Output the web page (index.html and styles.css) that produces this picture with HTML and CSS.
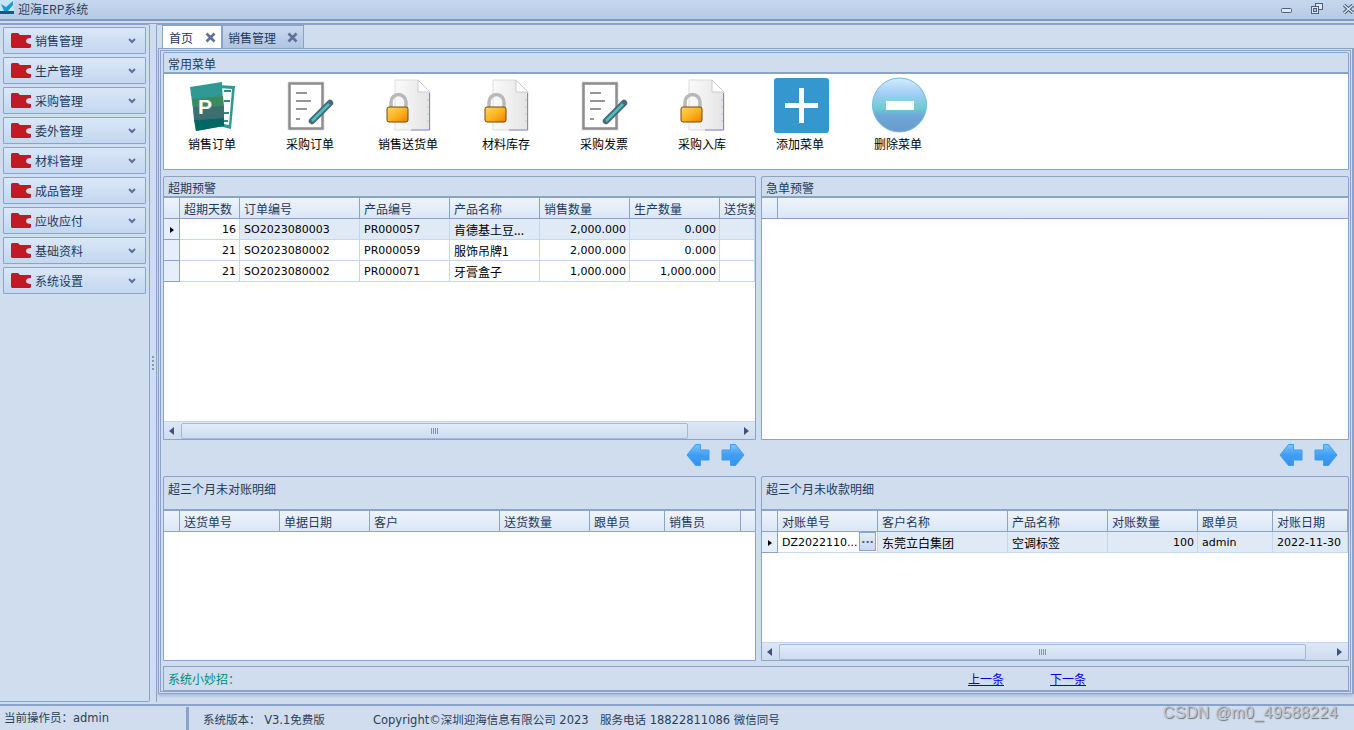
FILE: index.html
```html
<!DOCTYPE html>
<html lang="zh-CN">
<head>
<meta charset="utf-8">
<title>迎海ERP系统</title>
<link rel="stylesheet" href="styles.css">
</head>
<body>
<svg class="defs" width="0" height="0" aria-hidden="true">
  <defs>
    <linearGradient id="arrowfill" x1="0" y1="0" x2="0" y2="1"><stop offset="0" stop-color="#7cc4fa"/><stop offset=".5" stop-color="#3f9ff5"/><stop offset="1" stop-color="#3591ea"/></linearGradient>
    <symbol id="folder" viewBox="0 0 20 15"><path d="M1 0H7L9 2H20V5Q15 5 15 8T20 11V14L19 15H1L0 14V1Z" fill="#c11a25"/></symbol>
    <symbol id="chev" viewBox="0 0 8 6"><path d="M1 1L4 4L7 1" fill="none" stroke="#5b7197" stroke-width="2"/></symbol>
    <symbol id="close-x" viewBox="0 0 11 11"><path d="M1.500 1.500L9.500 9.500M9.500 1.500L1.500 9.500" stroke="#5c7298" stroke-width="2.600"/></symbol>
    <symbol id="publisher" viewBox="0 0 64 60">
      <path d="M36 10L54 11L50 54L34 50Z" fill="#2f9a94"/>
      <path d="M38 13L51 14L48 50L38 48Z" fill="#fff"/>
      <path d="M43 16H50M43 26H49M43 38H48M42 46H47" stroke="#2c8d8c" stroke-width="2"/>
      <path d="M9 12L41 7L43 51L15 56Z" fill="#2f9a94"/>
      <path d="M11 24L42 21L43 31L12 32Z" fill="#3d8a62"/>
      <path d="M12 32L43 31V43L13 45Z" fill="#3d6f72"/>
      <path d="M13 45L43 43V51L15 56Z" fill="#006763"/>
      <text x="17" y="39" class="pub-letter">P</text>
    </symbol>
    <symbol id="docpen" viewBox="0 0 64 60">
      <rect x="8" y="6" width="38" height="50" rx="2" fill="#f1f1f1"/>
      <rect x="10.500" y="8.500" width="33" height="45" fill="#fff" stroke="#8c8c8c" stroke-width="2.500"/>
      <path d="M17 18H28M17 26H32M17 34H28M17 44H21" stroke="#969696" stroke-width="2"/>
      <path d="M33 46L51 28" stroke="#4a6a72" stroke-width="6.500" stroke-linecap="round"/>
      <path d="M33 46L50 29" stroke="#4fbecb" stroke-width="2.500"/>
    </symbol>
    <symbol id="lockdoc" viewBox="0 0 64 60">
      <defs>
        <linearGradient id="lockfill" x1="0" y1="0" x2="1" y2="1"><stop offset="0" stop-color="#ffd65f"/><stop offset=".55" stop-color="#fbb11c"/><stop offset="1" stop-color="#f07c07"/></linearGradient>
        <linearGradient id="pagefill" x1="0" y1="0" x2="1" y2="0"><stop offset="0" stop-color="#fafafa"/><stop offset="1" stop-color="#e4e4e4"/></linearGradient>
      </defs>
      <path d="M18 5H41L53 17V55H18Z" fill="url(#pagefill)" stroke="#dcdcdc"/>
      <path d="M41 5V17H53Z" fill="#fff" stroke="#cbcbcb"/>
      <path d="M52.500 18V55H34" fill="none" stroke="#8a86c4"/>
      <path d="M51 24V50" stroke="#d6d6d6" stroke-width="2" stroke-dasharray="2 5"/>
      <path d="M14 33V27A7.500 7.500 0 0 1 29 27V33" fill="none" stroke="#b9b9b9" stroke-width="3.500"/>
      <rect x="10" y="32" width="21" height="15" rx="2" fill="url(#lockfill)" stroke="#6f4a10"/>
    </symbol>
    <symbol id="add" viewBox="0 0 64 60">
      <rect x="5" y="3" width="55" height="55" rx="3" fill="#3497ce"/>
      <path d="M32.500 13V48M16 30.500H49" stroke="#fff" stroke-width="5"/>
    </symbol>
    <symbol id="del" viewBox="0 0 64 60">
      <defs>
        <linearGradient id="ball" x1="0" y1="0" x2="0" y2="1"><stop offset="0" stop-color="#d2ecfb"/><stop offset=".3" stop-color="#9fcdf4"/><stop offset=".55" stop-color="#6fcdd2"/><stop offset=".7" stop-color="#6ea7d8"/><stop offset="1" stop-color="#6a9acb"/></linearGradient>
      </defs>
      <circle cx="32.500" cy="30" r="27" fill="url(#ball)" stroke="#6dbbe0"/>
      <rect x="19" y="26" width="28" height="9" fill="#fff"/>
    </symbol>
    <symbol id="arrow" viewBox="0 0 24 24">
      <path d="M9.500 1.500L1 12L9.500 22.500H14.500V17H23V7H14.500V1.500Z" fill="url(#arrowfill)" stroke="#3f9ff5" stroke-width="1" stroke-linejoin="round"/>
    </symbol>
  </defs>
</svg>

<header class="titlebar">
  <svg class="app-logo" viewBox="0 0 14 14" width="14" height="14"><rect width="14" height="14" fill="#c6e3f1"/><path d="M1 4L6 7L13 1V5L8 11H4Z" fill="#1c9ad6"/><path d="M0 11H14V14H0Z" fill="#14597f"/></svg>
  <span class="app-name">迎海ERP系统</span>
  <div class="win-controls">
    <svg class="win-min" width="11" height="5" viewBox="0 0 11 5"><rect x=".5" y=".5" width="10" height="4" rx="1" fill="#dfe8f4" stroke="#4c5f7f"/></svg>
    <svg class="win-restore" width="12" height="11" viewBox="0 0 12 11"><rect x="4.500" y=".5" width="7" height="6" fill="#dfe8f4" stroke="#4c5f7f"/><rect x=".5" y="3.500" width="7" height="7" fill="#dfe8f4" stroke="#4c5f7f"/><rect x="2.500" y="5.500" width="3" height="3" fill="#b9cce6" stroke="#4c5f7f"/></svg>
    <svg class="win-close" width="11" height="10" viewBox="0 0 11 10"><path d="M1 1L10 9M10 1L1 9" stroke="#4c5f7f" stroke-width="3.500"/><path d="M1 1L10 9M10 1L1 9" stroke="#e6eef8" stroke-width="1.200"/></svg>
  </div>
</header>

<div class="main">
  <nav class="sidebar">
    <a class="nav-item"><svg class="nav-folder"><use href="#folder"/></svg><span class="nav-label">销售管理</span><svg class="nav-chev"><use href="#chev"/></svg></a>
    <a class="nav-item"><svg class="nav-folder"><use href="#folder"/></svg><span class="nav-label">生产管理</span><svg class="nav-chev"><use href="#chev"/></svg></a>
    <a class="nav-item"><svg class="nav-folder"><use href="#folder"/></svg><span class="nav-label">采购管理</span><svg class="nav-chev"><use href="#chev"/></svg></a>
    <a class="nav-item"><svg class="nav-folder"><use href="#folder"/></svg><span class="nav-label">委外管理</span><svg class="nav-chev"><use href="#chev"/></svg></a>
    <a class="nav-item"><svg class="nav-folder"><use href="#folder"/></svg><span class="nav-label">材料管理</span><svg class="nav-chev"><use href="#chev"/></svg></a>
    <a class="nav-item"><svg class="nav-folder"><use href="#folder"/></svg><span class="nav-label">成品管理</span><svg class="nav-chev"><use href="#chev"/></svg></a>
    <a class="nav-item"><svg class="nav-folder"><use href="#folder"/></svg><span class="nav-label">应收应付</span><svg class="nav-chev"><use href="#chev"/></svg></a>
    <a class="nav-item"><svg class="nav-folder"><use href="#folder"/></svg><span class="nav-label">基础资料</span><svg class="nav-chev"><use href="#chev"/></svg></a>
    <a class="nav-item"><svg class="nav-folder"><use href="#folder"/></svg><span class="nav-label">系统设置</span><svg class="nav-chev"><use href="#chev"/></svg></a>
  </nav>

  <div class="splitter"><i></i><i></i><i></i><i></i></div>

  <section class="workspace">
    <div class="tabs">
      <div class="tab tab-active"><span>首页</span><svg class="tab-x"><use href="#close-x"/></svg></div>
      <div class="tab"><span>销售管理</span><svg class="tab-x"><use href="#close-x"/></svg></div>
    </div>
    <div class="page">
      <div class="page-inner">
        <section class="group group-menu">
          <h2 class="group-head">常用菜单</h2>
          <div class="shortcuts">
            <div class="shortcut"><svg class="shortcut-icon"><use href="#publisher"/></svg><span>销售订单</span></div>
            <div class="shortcut"><svg class="shortcut-icon"><use href="#docpen"/></svg><span>采购订单</span></div>
            <div class="shortcut"><svg class="shortcut-icon"><use href="#lockdoc"/></svg><span>销售送货单</span></div>
            <div class="shortcut"><svg class="shortcut-icon"><use href="#lockdoc"/></svg><span>材料库存</span></div>
            <div class="shortcut"><svg class="shortcut-icon"><use href="#docpen"/></svg><span>采购发票</span></div>
            <div class="shortcut"><svg class="shortcut-icon"><use href="#lockdoc"/></svg><span>采购入库</span></div>
            <div class="shortcut"><svg class="shortcut-icon"><use href="#add"/></svg><span>添加菜单</span></div>
            <div class="shortcut"><svg class="shortcut-icon"><use href="#del"/></svg><span>删除菜单</span></div>
          </div>
        </section>

        <div class="columns">
          <div class="column">
            <section class="group group-top">
              <h2 class="group-head">超期预警</h2>
              <div class="grid-area">
                <table class="grid">
                  <thead><tr><th class="c-rh"></th><th class="c60">超期天数</th><th class="c120">订单编号</th><th class="c90">产品编号</th><th class="c90">产品名称</th><th class="c90">销售数量</th><th class="c90">生产数量</th><th class="c-clip">送货数</th></tr></thead>
                  <tbody>
                    <tr class="row-sel"><td class="rh"><i class="cursor"></i></td><td class="num cell-plain">16</td><td>SO2023080003</td><td>PR000057</td><td class="cjk">肯德基土豆...</td><td class="num">2,000.000</td><td class="num">0.000</td><td></td></tr>
                    <tr><td class="rh"></td><td class="num">21</td><td>SO2023080002</td><td>PR000059</td><td class="cjk">服饰吊牌1</td><td class="num">2,000.000</td><td class="num">0.000</td><td></td></tr>
                    <tr><td class="rh"></td><td class="num">21</td><td>SO2023080002</td><td>PR000071</td><td class="cjk">牙膏盒子</td><td class="num">1,000.000</td><td class="num">1,000.000</td><td></td></tr>
                  </tbody>
                </table>
              </div>
              <div class="hscroll"><i class="sb-left"></i><div class="sb-track"><div class="sb-thumb thumb-a"><span class="grip"></span></div></div><i class="sb-right"></i></div>
            </section>
            <div class="pager"><svg class="pager-arrow"><use href="#arrow"/></svg><svg class="pager-arrow flip"><use href="#arrow"/></svg></div>
            <section class="group group-bottom">
              <h2 class="group-head tall">超三个月未对账明细</h2>
              <div class="grid-area">
                <table class="grid">
                  <thead><tr><th class="c-rh"></th><th class="c100">送货单号</th><th class="c90">单据日期</th><th class="c130">客户</th><th class="c90">送货数量</th><th class="c75">跟单员</th><th class="c76">销售员</th><th class="c-rest"></th></tr></thead>
                </table>
              </div>
            </section>
          </div>

          <div class="column">
            <section class="group group-top">
              <h2 class="group-head">急单预警</h2>
              <div class="grid-area">
                <table class="grid">
                  <thead><tr><th class="c-rh"></th><th class="c-fill"></th></tr></thead>
                </table>
              </div>
            </section>
            <div class="pager"><svg class="pager-arrow"><use href="#arrow"/></svg><svg class="pager-arrow flip"><use href="#arrow"/></svg></div>
            <section class="group group-bottom">
              <h2 class="group-head tall">超三个月未收款明细</h2>
              <div class="grid-area">
                <table class="grid">
                  <thead><tr><th class="c-rh"></th><th class="c100">对账单号</th><th class="c130">客户名称</th><th class="c100">产品名称</th><th class="c90">对账数量</th><th class="c75">跟单员</th><th class="c75">对账日期</th></tr></thead>
                  <tbody>
                    <tr class="row-sel"><td class="rh"><i class="cursor"></i></td><td class="cell-plain cell-edit">DZ2022110...<b class="ellipsis-btn">···</b></td><td class="cjk">东莞立白集团</td><td class="cjk">空调标签</td><td class="num">100</td><td>admin</td><td>2022-11-30</td></tr>
                  </tbody>
                </table>
              </div>
              <div class="hscroll"><i class="sb-left"></i><div class="sb-track"><div class="sb-thumb thumb-b"><span class="grip"></span></div></div><i class="sb-right"></i></div>
            </section>
          </div>
        </div>

        <footer class="tips">
          <span class="tips-label">系统小妙招：</span>
          <a class="tips-link tips-prev" href="#">上一条</a>
          <a class="tips-link tips-next" href="#">下一条</a>
        </footer>
      </div>
    </div>
  </section>
</div>

<footer class="status">
  <span class="status-user">当前操作员：admin</span>
  <span class="status-ver">系统版本： V3.1免费版</span>
  <span class="status-copy">Copyright©深圳迎海信息有限公司 2023</span>
  <span class="status-tel">服务电话 18822811086 微信同号</span>
</footer>
<div class="watermark">CSDN @m0_49588224</div>
</body>
</html>
```

FILE: styles.css
```css
* { box-sizing: border-box; }
html, body { margin: 0; height: 100%; }
body {
  position: relative;
  width: 1354px;
  height: 730px;
  overflow: hidden;
  display: flex;
  flex-direction: column;
  background: #d0ddee;
  color: #1e395b;
  font: 12px "DejaVu Sans", "Noto Sans CJK SC", sans-serif;
}
.defs { position: absolute; }
.pub-letter { font: bold 21px "Liberation Sans", sans-serif; fill: #fff; }

/* title bar */
.titlebar {
  height: 24px;
  flex: none;
  display: flex;
  align-items: flex-start;
  background: linear-gradient(#c6d8ee, #b6cae4) top / 100% 19px no-repeat, #d0ddee;
  border-bottom: 1px solid #8aa3c8;
  position: relative;
}
.titlebar::after {
  content: "";
  position: absolute;
  left: 0; right: 0; top: 19px;
  height: 2px;
  background: #7f9ac2;
}
.app-logo { flex: none; }
.app-name { margin: 1px 0 0 4px; line-height: 16px; color: #2b3e5c; font-family: "Noto Sans CJK SC", sans-serif; }
.win-controls { margin-left: auto; height: 19px; position: relative; width: 80px; }
.win-min { position: absolute; left: 7px; top: 8px; }
.win-restore { position: absolute; left: 37px; top: 3px; }
.win-close { position: absolute; left: 69px; top: 4px; }

/* main layout */
.main { height: 680px; flex: none; display: flex; }
.sidebar {
  width: 150px;
  flex: none;
  display: flex;
  flex-direction: column;
  gap: 3px;
  padding: 2px 3px;
  border: 1px solid #8aa3c8;
  border-left: 0;
  border-radius: 0 2px 2px 0;
  height: 678px;
}
.nav-item {
  height: 27px;
  flex: none;
  display: flex;
  align-items: center;
  padding-left: 7px;
  background: linear-gradient(#dbe7f7, #c3d7f0);
  border: 1px solid #8aa3c8;
  border-radius: 1px;
}
.nav-folder { width: 20px; height: 15px; flex: none; }
.nav-label { margin-left: 4px; font-family: "Noto Sans CJK SC", sans-serif; font-size: 12px; }
.nav-chev { width: 8px; height: 6px; margin-left: auto; margin-right: 9px; }

.splitter {
  width: 6px;
  flex: none;
  display: flex;
  flex-direction: column;
  justify-content: center;
  align-items: center;
  gap: 2px;
  height: 678px;
}
.splitter i { width: 2px; height: 2px; background: #7f9ac2; }

.workspace {
  flex: 1;
  min-width: 0;
  height: 678px;
  display: flex;
  flex-direction: column;
  border-left: 1px solid #8aa3c8;
  border-top: 1px solid #8aa3c8;
  border-radius: 2px 0 0 0;
}

/* tabs */
.tabs { height: 23px; flex: none; display: flex; padding-left: 5px; }
.tab {
  width: 82px;
  height: 23px;
  display: flex;
  align-items: center;
  justify-content: space-between;
  padding: 0 5px 0 5px;
  background: linear-gradient(#c9d9ee, #b0c5e1);
  border: 1px solid #8aa3c8;
  border-bottom: 0;
  color: #1e395b;
  font-family: "Noto Sans CJK SC", sans-serif;
}
.tab-active { width: 60px; padding-left: 6px; background: #fff; }
.tab-x { width: 11px; height: 11px; flex: none; }
.page {
  margin-left: 1px;
  border: 1px solid #8aa3c8;
  border-right-width: 2px;
  padding: 1px;
  height: 646px;
  flex: none;
  box-shadow: 0 2px 3px #a9bbd6;
}
.page-inner {
  height: 642px;
  border: 1px solid #8aa3c8;
  padding: 1px 1px 0 2px;
  display: flex;
  flex-direction: column;
  gap: 6px;
}

/* groups */
.group { display: flex; flex-direction: column; border: 1px solid #8aa3c8; border-radius: 2px 2px 0 0; }
.group-menu { height: 118px; flex: none; }
.group-head {
  margin: 0;
  height: 21px;
  flex: none;
  padding: 3px 0 0 4px;
  font: 12px/16px "Noto Sans CJK SC", sans-serif;
  color: #1e395b;
  border-bottom: 2px solid #8aa3c8;
}
.group-head.tall { height: 34px; padding-top: 4px; }
.shortcuts { flex: 1; display: flex; background: #fff; padding-top: 1px; }
.shortcut {
  width: 98px;
  flex: none;
  display: flex;
  flex-direction: column;
  align-items: center;
  color: #000;
  font-family: "Noto Sans CJK SC", sans-serif;
}
.shortcut-icon { width: 64px; height: 60px; flex: none; }
.shortcut span { line-height: 16px; margin-top: 1px; margin-left: -2px; }

.columns { display: grid; grid-template-columns: 593px 588px; column-gap: 5px; height: 485px; flex: none; }
.column { display: flex; flex-direction: column; min-width: 0; }
.group-top { height: 264px; flex: none; }
.group-bottom { height: 185px; flex: none; }
.pager { height: 36px; flex: none; display: flex; align-items: center; justify-content: flex-end; gap: 11px; padding-right: 11px; padding-bottom: 7px; }
.pager-arrow { width: 24px; height: 24px; }
.pager-arrow.flip { transform: scaleX(-1); }

/* data grids */
.grid-area { flex: 1; min-height: 0; background: #fff; overflow: hidden; }
.grid { border-collapse: separate; border-spacing: 0; table-layout: fixed; width: 0; font-size: 11px; color: #000; }
.grid th {
  height: 21px;
  padding: 0 4px;
  text-align: left;
  font: 12px "Noto Sans CJK SC", sans-serif;
  color: #1e395b;
  background: linear-gradient(#eef4fc, #dbe6f6);
  border-right: 1px solid #8aa3c8;
  border-bottom: 1px solid #8aa3c8;
  white-space: nowrap;
  overflow: hidden;
}
.grid td {
  height: 21px;
  padding: 0 4px;
  white-space: nowrap;
  overflow: hidden;
  border-right: 1px solid #c4d7f0;
  border-bottom: 1px solid #c4d7f0;
}
.grid td.cjk { font: 12px "Noto Sans CJK SC", sans-serif; }
.grid td.num { text-align: right; padding-right: 3px; }
.grid td.rh {
  background: #e6eefa;
  border-right-color: #8aa3c8;
  border-bottom-color: #8aa3c8;
  padding: 0;
  text-align: center;
}
.row-sel td { background: #e0eaf6; }
.row-sel td.cell-plain { background: #fff; }
.cursor { display: inline-block; border: 3.500px solid transparent; border-left: 4px solid #000; border-right: 0; vertical-align: middle; }
.c-rh { width: 16px; }
.c60 { width: 60px; }
.c75 { width: 75px; }
.c76 { width: 76px; }
.c90 { width: 90px; }
.c100 { width: 100px; }
.c120 { width: 120px; }
.c130 { width: 130px; }
.c-rest { width: 15px; }
.c-clip { width: 35px; border-right: 0 !important; }
.c-fill { width: 570px; border-right: 0 !important; }
.cell-edit { position: relative; }
.ellipsis-btn {
  position: absolute;
  right: 1px; top: 0; bottom: 1px;
  width: 17px;
  text-align: center;
  font: bold 11px/19px "DejaVu Sans", sans-serif;
  color: #4c5f7f;
  background: linear-gradient(#e4edf8, #c9d9ee);
  border: 1px solid #8aa3c8;
}

/* scrollbars */
.hscroll {
  height: 18px;
  flex: none;
  display: flex;
  align-items: center;
  padding: 0 4px;
  background: linear-gradient(#dce7f5, #cfdcee);
  border-top: 1px solid #c4d7f0;
}
.sb-left { border: 4px solid transparent; border-right: 5px solid #40527a; border-left: 0; margin-left: 1px; width: 5px; flex: none; }
.sb-right { border: 4px solid transparent; border-left: 5px solid #40527a; border-right: 0; margin-right: 2px; width: 5px; flex: none; }
.sb-track { flex: 1; height: 16px; padding-left: 7px; min-width: 0; }
.sb-thumb {
  height: 16px;
  display: flex;
  align-items: center;
  justify-content: center;
  background: linear-gradient(#e2ecf8, #cddcf0);
  border: 1px solid #a3b9d8;
  border-radius: 2px;
}
.thumb-a { width: 507px; }
.thumb-b { width: 527px; }
.grip { width: 7px; height: 6px; background: repeating-linear-gradient(90deg, #7f93b5 0 1px, transparent 1px 2px); }

/* tips bar */
.tips {
  height: 25px;
  flex: none;
  display: flex;
  align-items: center;
  padding-left: 4px;
  border: 1px solid #8aa3c8;
  font-family: "Noto Sans CJK SC", sans-serif;
  margin-top: -1px;
}
.tips-label { color: #008a7a; width: 800px; flex: none; }
.tips-link { color: #0000ee; text-decoration: underline; }
.tips-next { margin-left: 46px; }

/* status bar */
.status {
  flex: 1;
  display: flex;
  align-items: center;
  border-top: 1px solid #8aa3c8;
  box-shadow: inset 0 1px 0 #8aa3c8;
  color: #2b3e5c;
  font-size: 11.500px;
  padding-top: 2px;
}
.status span { white-space: nowrap; }
.status-user { width: 189px; height: 100%; padding: 2px 0 0 4px; border-right: 3px solid #8aa3c8; flex: none; }
.status-ver { margin-left: 14px; width: 170px; flex: none; }
.status-copy { width: 227px; flex: none; }

.watermark {
  position: absolute;
  right: 16px;
  top: 704px;
  font: 16px "Liberation Sans", sans-serif;
  letter-spacing: .4px;
  color: #c3c8d0;
  text-shadow: 1px 1px 1px #6b7078;
}
```
